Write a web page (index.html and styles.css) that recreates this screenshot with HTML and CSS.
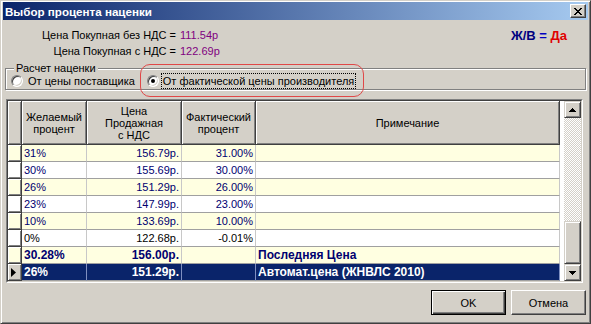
FILE: index.html
```html
<!DOCTYPE html>
<html>
<head>
<meta charset="utf-8">
<title>Выбор процента наценки</title>
<link rel="stylesheet" href="styles.css">
</head>
<body>
<div class="window">
  <div class="titlebar">
    <span class="title">Выбор процента наценки</span>
    <span class="close"><svg width="8" height="7" viewBox="0 0 8 7" shape-rendering="crispEdges"><path d="M0 0h2v1H0zM6 0h2v1H6zM1 1h2v1H1zM5 1h2v1H5zM2 2h4v1H2zM3 3h2v1H3zM2 4h4v1H2zM1 5h2v1H1zM5 5h2v1H5zM0 6h2v1H0zM6 6h2v1H6z" fill="#000"/></svg></span>
  </div>
  <div class="content">
    <div class="prices">
      <div class="price-grid">
        <span class="lbl">Цена Покупная без НДС =</span><span class="val">111.54р</span>
        <span class="lbl">Цена Покупная с НДС =</span><span class="val">122.69р</span>
      </div>
      <div class="jv"><span class="jv-k">Ж/В</span> <span class="jv-eq">=</span> <span class="jv-v">Да</span></div>
    </div>
    <fieldset class="group">
      <legend>Расчет наценки</legend>
      <div class="radios">
        <label class="radio"><span class="dot"></span><span class="rtext">От цены поставщика</span></label>
        <label class="radio marked"><span class="dot on"></span><span class="rtext focus">От фактической цены производителя</span></label>
      </div>
    </fieldset>
    <div class="grid-frame">
      <div class="grid-inner">
        <table class="grid">
          <thead>
            <tr>
              <th class="ind w-ind"></th>
              <th class="w1">Желаемый<br>процент</th>
              <th class="w2">Цена<br>Продажная<br>с НДС</th>
              <th class="w3">Фактический<br>процент</th>
              <th class="w4">Примечание</th>
              <th class="fill w-fill"></th>
            </tr>
          </thead>
          <tbody>
            <tr class="y"><td class="ind"></td><td>31%</td><td class="r">156.79р.</td><td class="r">31.00%</td><td></td><td class="fill"></td></tr>
            <tr class="w"><td class="ind"></td><td>30%</td><td class="r">155.69р.</td><td class="r">30.00%</td><td></td><td class="fill"></td></tr>
            <tr class="y"><td class="ind"></td><td>26%</td><td class="r">151.29р.</td><td class="r">26.00%</td><td></td><td class="fill"></td></tr>
            <tr class="w"><td class="ind"></td><td>23%</td><td class="r">147.99р.</td><td class="r">23.00%</td><td></td><td class="fill"></td></tr>
            <tr class="y"><td class="ind"></td><td>10%</td><td class="r">133.69р.</td><td class="r">10.00%</td><td></td><td class="fill"></td></tr>
            <tr class="w blk"><td class="ind"></td><td>0%</td><td class="r">122.68р.</td><td class="r">-0.01%</td><td></td><td class="fill"></td></tr>
            <tr class="y b"><td class="ind"></td><td>30.28%</td><td class="r">156.00р.</td><td class="r"></td><td>Последняя Цена</td><td class="fill"></td></tr>
            <tr class="sel b"><td class="ind"><svg width="6" height="9" viewBox="0 0 6 9"><polygon points="0,0 5,4.5 0,9" fill="#000"/></svg></td><td>26%</td><td class="r">151.29р.</td><td class="r"></td><td>Автомат.цена (ЖНВЛС 2010)</td><td class="fill"></td></tr>
          </tbody>
        </table>
        <div class="vscroll">
          <span class="sb-btn"><svg width="7" height="4" viewBox="0 0 7 4" shape-rendering="crispEdges"><path d="M3 0h1v1H3zM2 1h3v1H2zM1 2h5v1H1zM0 3h7v1H0z" fill="#000"/></svg></span>
          <span class="track"><span class="thumb"></span></span>
          <span class="sb-btn"><svg width="7" height="4" viewBox="0 0 7 4" shape-rendering="crispEdges"><path d="M0 0h7v1H0zM1 1h5v1H1zM2 2h3v1H2zM3 3h1v1H3z" fill="#000"/></svg></span>
        </div>
      </div>
    </div>
  </div>
  <div class="footer">
    <span class="btn default">OK</span>
    <span class="btn">Отмена</span>
  </div>
</div>
</body>
</html>
```
FILE: styles.css
```css
* { box-sizing: border-box; }
html, body { margin: 0; padding: 0; }
body {
  background: #d4d0c8;
  font: 11px "Liberation Sans", Arial, sans-serif;
  color: #000;
}
.window {
  width: 591px;
  height: 324px;
  display: flex;
  flex-direction: column;
  background: #d4d0c8;
  border: 1px solid;
  border-color: #d4d0c8 #404040 #404040 #d4d0c8;
  box-shadow: inset 1px 1px #fff, inset -1px -1px #808080;
  padding: 1px 2px 2px 2px;
}
.titlebar {
  height: 18px;
  flex: none;
  display: flex;
  align-items: center;
  padding: 0 2px 0 2px;
  background: linear-gradient(90deg, #0a246a 0%, #a6caf0 100%);
}
.title {
  color: #fff;
  font-weight: bold;
  font-size: 11.6px;
}
.close {
  margin-left: auto;
  width: 16px;
  height: 14px;
  display: flex;
  align-items: center;
  justify-content: center;
  background: #d4d0c8;
  border: 1px solid;
  border-color: #fff #404040 #404040 #fff;
  box-shadow: inset -1px -1px #808080;
}
.content {
  padding: 0 2px;
  display: flex;
  flex-direction: column;
}
.prices {
  display: flex;
  justify-content: space-between;
  align-items: flex-start;
  padding-top: 7px;
}
.price-grid {
  display: grid;
  grid-template-columns: 171px auto;
  column-gap: 4px;
  line-height: 16px;
}
.lbl { text-align: right; }
.val { color: #800080; }
.jv {
  font-weight: bold;
  font-size: 13px;
  line-height: 16px;
  margin-top: 1px;
  margin-right: 19px;
}
.jv-k { color: #000080; }
.jv-eq { color: #0000c0; }
.jv-v { color: #e00000; }
.group {
  margin: 3px 0 0 0;
  padding: 0 5px 0 5px;
  border: 1px solid #808080;
  box-shadow: inset 1px 1px #fff, 1px 1px #fff;
  min-width: 0;
}
.group legend {
  padding: 0 2px;
  margin-left: 3px;
  line-height: 13px;
  background: #d4d0c8;
}
.radios {
  display: flex;
  align-items: center;
  height: 16px;
  margin-top: -2px;
}
.radio {
  display: flex;
  align-items: center;
  height: 16px;
}
.radio + .radio { margin-left: 12px; }
.dot {
  width: 12px;
  height: 12px;
  border-radius: 50%;
  background: #fff;
  border: 1px solid;
  border-color: #808080 #fff #fff #808080;
  box-shadow: inset 1px 1px #404040, inset -1px -1px #d4d0c8;
  margin-right: 5px;
  position: relative;
  display: flex;
  align-items: center;
  justify-content: center;
}
.dot.on::after {
  content: "";
  width: 4px;
  height: 4px;
  border-radius: 50%;
  background: #000;
}
.rtext { line-height: 14px; }
.focus {
  outline: 1px dotted #000;
  outline-offset: 0;
  padding: 0 1px;
  margin-left: -2px;
  line-height: 14px;
}
.marked { position: relative; }
.marked::after {
  content: "";
  position: absolute;
  left: -7px;
  right: -9px;
  top: -9px;
  bottom: -8px;
  border: 1px solid #e04848;
  border-radius: 10px;
}
.grid-frame {
  margin: 9px 3px 0 1px;
  border: 1px solid;
  border-color: #808080 #fff #fff #808080;
}
.grid-inner {
  display: flex;
  border: 1px solid;
  border-color: #404040 #d4d0c8 #d4d0c8 #404040;
  background: #fff;
}
.grid {
  border-collapse: separate;
  border-spacing: 0;
  table-layout: fixed;
  width: 556px;
  background: #fff;
}
.grid th, .grid td {
  padding: 0 2px;
  white-space: nowrap;
  overflow: hidden;
}
.grid th {
  height: 44px;
  font-weight: normal;
  line-height: 12px;
  text-align: center;
  vertical-align: middle;
  background: #d4d0c8;
  border-right: 1px solid #404040;
  border-bottom: 1px solid #404040;
  box-shadow: inset 1px 1px #fff, inset -1px -1px #808080;
}
.w-ind { width: 14px; }
.w1 { width: 65px; }
.w2 { width: 95px; }
.w3 { width: 74px; }
.w4 { width: 304px; }
.w-fill { width: 4px; }
.grid td {
  height: 17px;
  line-height: 16px;
  color: #000070;
  border-right: 1px solid #c8c8c8;
  border-bottom: 1px solid #a0a0a0;
}
.grid .r { text-align: right; }
.grid td.ind, .grid th.ind {
  background: #d4d0c8;
  padding: 0;
  border-right: 1px solid #404040;
  border-bottom: 1px solid #404040;
  box-shadow: inset 1px 1px #fff, inset -1px -1px #808080;
  vertical-align: middle;
  text-align: center;
}
.grid td.ind svg { display: block; margin: 0 0 0 3px; }
.grid .fill, .grid th.fill {
  background: #fff;
  border: none;
  box-shadow: none;
  padding: 0;
}
.grid tr.y td { background: #ffffe1; }
.grid tr.w td { background: #fff; }
.grid tr.blk td { color: #000; }
.grid tr.b td { font-weight: bold; font-size: 12px; }
.grid tr.sel td {
  background: #0a246a;
  color: #fff;
  border-right-color: #7f8fc0;
}
.grid tr td.fill { background: #fff; }
.grid tr.sel td.ind { background: #d4d0c8; border-right-color: #404040; }
.vscroll {
  width: 17px;
  display: flex;
  flex-direction: column;
  background: repeating-conic-gradient(#fff 0 25%, #d4d0c8 0 50%) 0 0 / 2px 2px;
}
.sb-btn, .thumb {
  background: #d4d0c8;
  border: 1px solid;
  border-color: #d4d0c8 #404040 #404040 #d4d0c8;
  box-shadow: inset 1px 1px #fff, inset -1px -1px #808080;
}
.sb-btn {
  height: 17px;
  flex: none;
  display: flex;
  align-items: center;
  justify-content: center;
}
.track {
  flex: 1;
  display: flex;
  flex-direction: column;
  justify-content: flex-end;
}
.thumb {
  height: 43px;
  display: block;
}
.footer {
  margin-top: auto;
  display: flex;
  justify-content: flex-end;
  gap: 5px;
  padding: 3px 2px 6px;
}
.btn {
  width: 75px;
  height: 25px;
  display: flex;
  align-items: center;
  justify-content: center;
  background: #d4d0c8;
  border: 1px solid;
  border-color: #fff #404040 #404040 #fff;
  box-shadow: inset -1px -1px #808080;
}
.btn.default {
  border-color: #000;
  box-shadow: inset 1px 1px #fff, inset -1px -1px #404040, inset -2px -2px #808080;
}
```
